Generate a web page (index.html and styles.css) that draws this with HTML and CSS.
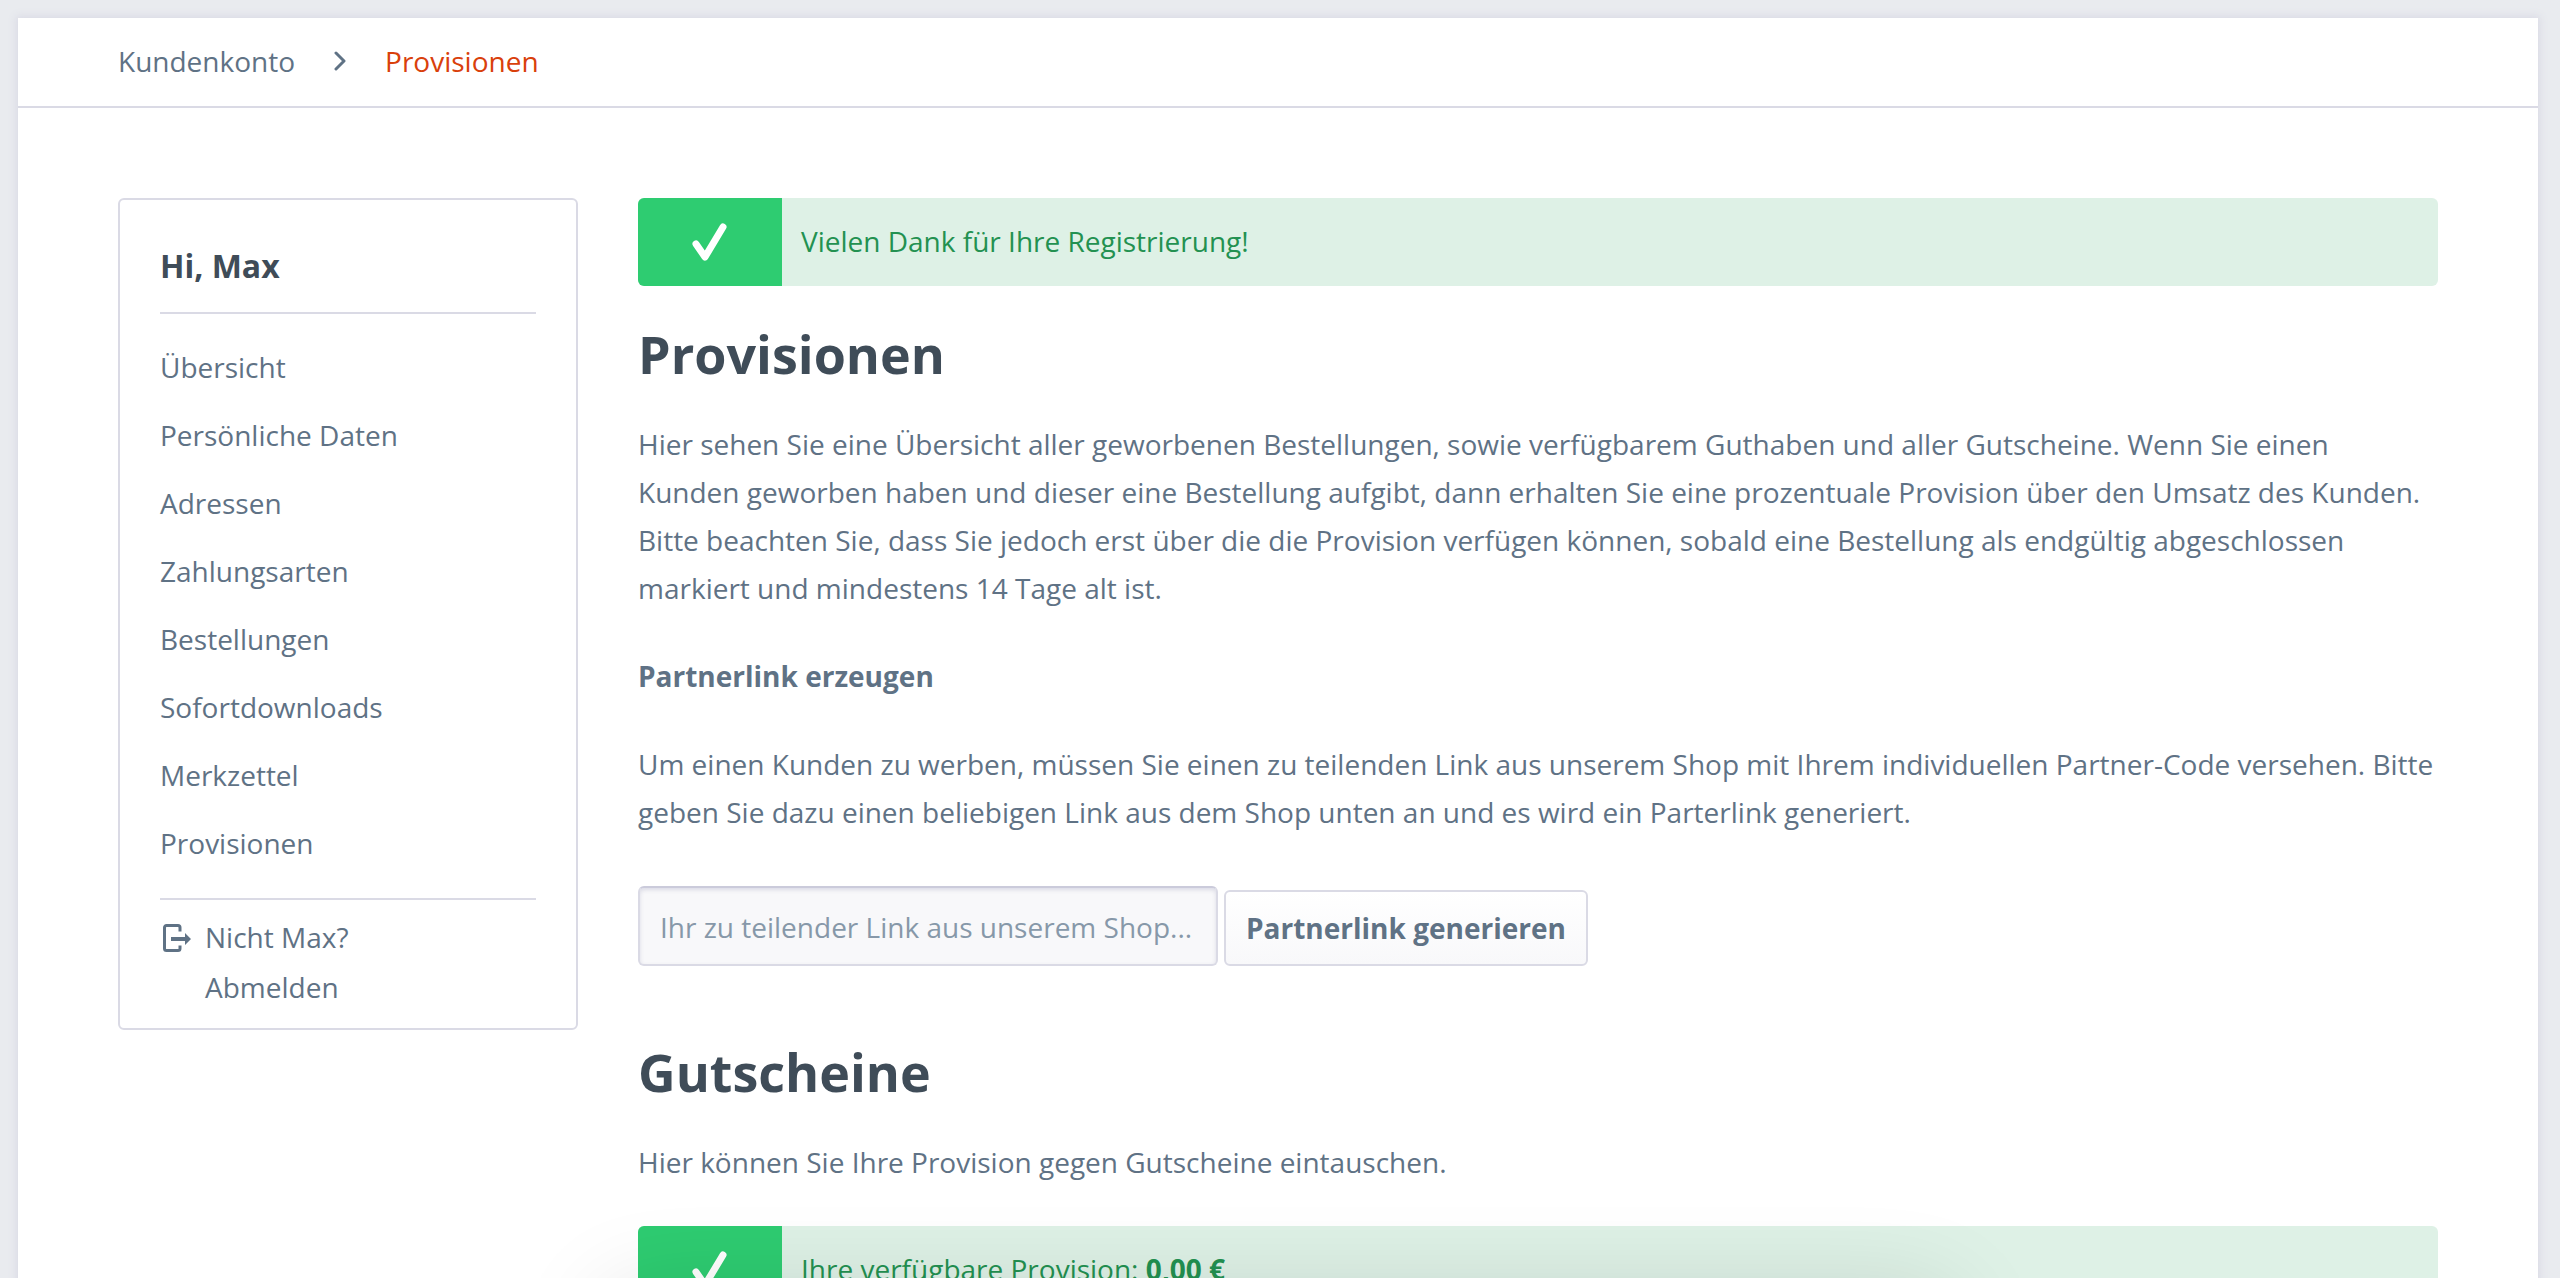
FILE: index.html
```
<!DOCTYPE html>
<html lang="de">
<head>
<meta charset="utf-8">
<meta name="viewport" content="width=device-width, initial-scale=1">
<title>Provisionen</title>
<link rel="stylesheet" href="styles.css">
</head>
<body>
<div class="page">
  <nav class="breadcrumb" aria-label="Breadcrumb">
    <a href="#">Kundenkonto</a>
    <svg class="breadcrumb-arrow" viewBox="0 0 12 20" aria-hidden="true"><path d="M2 2l8 8-8 8"/></svg>
    <a class="is-active" href="#">Provisionen</a>
  </nav>
  <div class="content">
    <aside class="sidebar">
      <h2 class="sidebar-title">Hi, Max</h2>
      <ul class="sidebar-nav">
        <li><a href="#">Übersicht</a></li>
        <li><a href="#">Persönliche Daten</a></li>
        <li><a href="#">Adressen</a></li>
        <li><a href="#">Zahlungsarten</a></li>
        <li><a href="#">Bestellungen</a></li>
        <li><a href="#">Sofortdownloads</a></li>
        <li><a href="#">Merkzettel</a></li>
        <li><a href="#">Provisionen</a></li>
      </ul>
      <a class="logout" href="#">
        <svg class="logout-icon" viewBox="0 0 28 28" aria-hidden="true"><path class="frame" d="M17 7.500V3.500a2 2 0 0 0-2-2H3.500a2 2 0 0 0-2 2v21a2 2 0 0 0 2 2H15a2 2 0 0 0 2-2V21.500"/><path d="M8 13h14V9l6 6-6 6V17H8z"/></svg>
        <span>Nicht Max?<br>Abmelden</span>
      </a>
    </aside>
    <main class="main">
      <div class="alert">
        <div class="alert-icon"><svg viewBox="0 0 36 38" aria-hidden="true"><path d="M4 21l9 13L31 4"/></svg></div>
        <div class="alert-text">Vielen Dank für Ihre Registrierung!</div>
      </div>
      <h1>Provisionen</h1>
      <p>Hier sehen Sie eine Übersicht aller geworbenen Bestellungen, sowie verfügbarem Guthaben und aller Gutscheine. Wenn Sie einen Kunden geworben haben und dieser eine Bestellung aufgibt, dann erhalten Sie eine prozentuale Provision über den Umsatz des Kunden. Bitte beachten Sie, dass Sie jedoch erst über die die Provision verfügen können, sobald eine Bestellung als endgültig abgeschlossen markiert und mindestens 14 Tage alt ist.</p>
      <p><strong>Partnerlink erzeugen</strong></p>
      <p>Um einen Kunden zu werben, müssen Sie einen zu teilenden Link aus unserem Shop mit Ihrem individuellen Partner-Code versehen. Bitte geben Sie dazu einen beliebigen Link aus dem Shop unten an und es wird ein Parterlink generiert.</p>
      <form class="link-form">
        <input type="text" aria-label="Ihr zu teilender Link" placeholder="Ihr zu teilender Link aus unserem Shop...">
        <button type="button">Partnerlink generieren</button>
      </form>
      <h1>Gutscheine</h1>
      <p>Hier können Sie Ihre Provision gegen Gutscheine eintauschen.</p>
      <div class="alert">
        <div class="alert-icon"><svg viewBox="0 0 36 38" aria-hidden="true"><path d="M4 21l9 13L31 4"/></svg></div>
        <div class="alert-text">Ihre verfügbare Provision: <strong>0,00 €</strong></div>
      </div>
    </main>
  </div>
</div>
<div class="drawer-shadow"></div>
</body>
</html>
```
FILE: styles.css
```
* {
  box-sizing: border-box;
}

html,
body {
  height: 100%;
}

body {
  margin: 0;
  padding: 18px 22px 0 18px;
  overflow: hidden;
  background: #e9ebef;
  color: #5f7285;
  font-family: "Open Sans", "Noto Sans", sans-serif;
  font-size: 28px;
  line-height: 48px;
}

a {
  color: inherit;
  text-decoration: none;
}

.page {
  min-height: 100%;
  background: #fff;
  box-shadow: 0 0 8px 2px #dadae5;
}

.breadcrumb {
  display: flex;
  align-items: center;
  gap: 39px;
  height: 90px;
  padding: 0 100px 2px;
  border-bottom: 2px solid #dadae5;
}

.breadcrumb .is-active {
  color: #d9400b;
}

.breadcrumb-arrow {
  width: 12px;
  height: 20px;
  fill: none;
  stroke: #5f7285;
  stroke-width: 3;
  stroke-linecap: round;
  stroke-linejoin: round;
}

.content {
  display: flex;
  align-items: flex-start;
  gap: 60px;
  padding: 90px 100px;
}

.sidebar {
  flex: 0 0 460px;
  padding: 40px 40px 16px;
  border: 2px solid #dadae5;
  border-radius: 6px;
}

.sidebar-title {
  margin: 0;
  padding-bottom: 20px;
  border-bottom: 2px solid #dadae5;
  color: #3f4c58;
  font-size: 32px;
  line-height: 52px;
}

.sidebar-nav {
  margin: 0;
  padding: 19px 0 21px;
  border-bottom: 2px solid #dadae5;
  list-style: none;
  line-height: 68px;
}

.sidebar-nav a {
  display: block;
}

.logout {
  display: flex;
  gap: 14px;
  padding-top: 12px;
  line-height: 50px;
}

.logout-icon {
  width: 28px;
  height: 28px;
  margin: 12px 0 0 3px;
  fill: #5f7285;
}

.logout-icon .frame {
  fill: none;
  stroke: #5f7285;
  stroke-width: 3;
}

.main {
  flex: 1;
  min-width: 0;
}

.main h1 {
  margin: 0 0 30px;
  color: #3f4c58;
  font-size: 52px;
  line-height: 72px;
}

.main p {
  margin: 0 0 40px;
  padding-right: 3px;
}

.alert {
  display: flex;
  min-height: 88px;
  margin-bottom: 32px;
  overflow: hidden;
  border-radius: 6px;
  background: #def1e6;
  color: #239151;
}

.alert-icon {
  display: flex;
  flex: 0 0 144px;
  align-items: center;
  justify-content: center;
  background: #2ecc71;
}

.alert-icon svg {
  width: 36px;
  height: 38px;
  fill: none;
  stroke: #fff;
  stroke-width: 7;
  stroke-linecap: round;
  stroke-linejoin: round;
}

.alert-text {
  padding: 19px;
}

.link-form {
  display: flex;
  align-items: flex-end;
  gap: 6px;
  margin: 50px 0 70px;
}

.link-form input {
  width: 580px;
  height: 80px;
  padding: 2px 20px 0;
  border: 2px solid #dadae5;
  border-top-color: #cbcbdb;
  border-radius: 6px;
  background: #f8f8fa;
  box-shadow: inset 0 2px 4px #dadae5;
  color: #5f7285;
  font: inherit;
}

.link-form input::placeholder {
  color: #8798a9;
  opacity: 1;
}

.link-form button {
  height: 76px;
  padding: 0 20px;
  border: 2px solid #dadae5;
  border-radius: 6px;
  background: linear-gradient(#fff, #f8f8fa);
  color: #5f7285;
  font: inherit;
  font-weight: 700;
}

.drawer-shadow {
  position: fixed;
  top: calc(100% + 20px);
  left: 50%;
  width: 1340px;
  height: 200px;
  margin-left: -670px;
  box-shadow: 0 0 100px rgba(0, 0, 0, .14);
}
```
